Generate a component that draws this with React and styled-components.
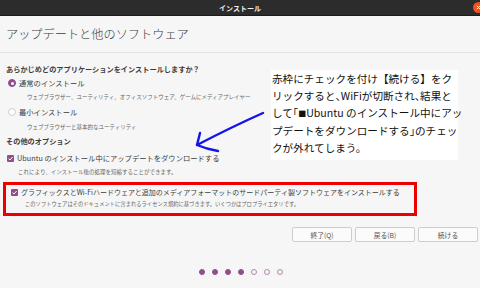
import React from "react";
import styled, { createGlobalStyle } from "styled-components";

const GlobalStyle = createGlobalStyle`
  html, body {
    margin: 0;
    padding: 0;
    background: #f6f6f6;
  }
  body {
    font-family: "Noto Sans CJK JP", "Noto Sans", sans-serif;
  }
`;

const Window = styled.div`
  position: relative;
  width: 480px;
  height: 288px;
  overflow: hidden;
  background: #f6f6f6;
  display: flex;
  flex-direction: column;
`;

const TitleBar = styled.div`
  position: relative;
  height: 15px;
  background: #2c2c2c;
  border-bottom: 1px solid #1a1a1a;
  display: flex;
  align-items: center;
  justify-content: center;
  color: #f2f2f2;
  font-size: 7px;
  font-weight: 700;
`;

const CloseButton = styled.svg`
  position: absolute;
  right: -4px;
  top: 2px;
`;

const Header = styled.div`
  height: 36px;
  display: flex;
  align-items: center;
  padding-left: 6px;
  border-bottom: 1px solid #e3e3e3;
  color: #3c3c3c;
  font-size: 12.2px;
  font-weight: 300;
`;

const Content = styled.div`
  display: flex;
  flex-direction: column;
  padding-top: 9px;
`;

const Row = styled.div`
  height: ${({ h }) => h}px;
  display: flex;
  align-items: center;
  gap: 3px;
  padding-left: ${({ indent }) => indent}px;
  color: ${({ muted }) => (muted ? "#666" : "#3c3c3c")};
  font-size: ${({ size }) => size}px;
  font-weight: ${({ bold }) => (bold ? 700 : 400)};
  white-space: nowrap;
`;

const Radio = styled.span`
  width: 8px;
  height: 8px;
  box-sizing: border-box;
  border-radius: 50%;
  flex: none;
  background: ${({ on }) => (on ? "#924d8b" : "#fff")};
  border: 1px solid ${({ on }) => (on ? "#924d8b" : "#cfcfcf")};
  display: flex;
  align-items: center;
  justify-content: center;
  &::after {
    content: "";
    width: 3px;
    height: 3px;
    border-radius: 50%;
    background: ${({ on }) => (on ? "#fff" : "transparent")};
  }
`;

const RedBox = styled.div`
  margin: 6px 63px 0 3px;
  border: 3px solid #ee0000;
  padding-bottom: 4px;
  display: flex;
  flex-direction: column;
`;

const Buttons = styled.div`
  margin-top: 11px;
  display: flex;
  justify-content: flex-end;
  gap: 3px;
  padding-right: 2px;
`;

const Button = styled.div`
  width: 58px;
  height: 13px;
  border: 1px solid #cdcdcd;
  border-radius: 2px;
  background: #fbfbfb;
  display: flex;
  align-items: center;
  justify-content: center;
  color: #555;
  font-size: 6.8px;
`;

const Dots = styled.div`
  margin-top: 27px;
  display: flex;
  gap: 7px;
  padding-left: 199px;
`;

const Dot = styled.span`
  width: 6px;
  height: 6px;
  box-sizing: border-box;
  border-radius: 50%;
  background: ${({ on }) => (on ? "#924d8b" : "transparent")};
  border: 1px solid ${({ on }) => (on ? "#924d8b" : "#b488b0")};
`;

const Note = styled.div`
  position: absolute;
  left: 271px;
  top: 70px;
  width: 187px;
  height: 90px;
  background: #fff;
  color: #111;
  font-size: 10.6px;
  line-height: 17px;
  white-space: nowrap;
  padding-left: 1px;
  box-sizing: border-box;
`;

const Punct = styled.span`
  font-feature-settings: "halt";
`;

const Square = styled.span`
  font-size: 8px;
`;

const Arrow = styled.svg`
  position: absolute;
  left: 190px;
  top: 105px;
`;

function Check() {
  return (
    <svg width="7" height="7" viewBox="0 0 7 7" style={{ flex: "none" }}>
      <rect width="7" height="7" rx="1" fill="#924d8b" />
      <path d="M1.5 3.6 L3 5 L5.6 2" stroke="#fff" strokeWidth="1" fill="none" />
    </svg>
  );
}

export default function App() {
  return (
    <>
      <GlobalStyle />
      <Window>
        <TitleBar>
          インストール
          <CloseButton width="11" height="11" viewBox="0 0 11 11">
            <circle cx="5.5" cy="5.5" r="5.5" fill="#e95420" />
            <path d="M3.7 3.7 L7.3 7.3 M7.3 3.7 L3.7 7.3" stroke="#fff" strokeWidth="1" />
          </CloseButton>
        </TitleBar>
        <Header>アップデートと他のソフトウェア</Header>
        <Content>
          <Row h={14} indent={6} size={7.2} bold>
            あらかじめどのアプリケーションをインストールしますか？
          </Row>
          <Row h={14} indent={8} size={7.3}>
            <Radio on />
            通常のインストール
          </Row>
          <Row h={14} indent={27} size={5.5} muted>
            ウェブブラウザー、ユーティリティ、オフィスソフトウェア、ゲームにメディアプレイヤー
          </Row>
          <Row h={16} indent={8} size={7.3}>
            <Radio />
            最小インストール
          </Row>
          <Row h={14} indent={27} size={5.5} muted>
            ウェブブラウザーと基本的なユーティリティ
          </Row>
          <Row h={14} indent={6} size={7.2} bold>
            その他のオプション
          </Row>
          <Row h={20} indent={7} size={7.3}>
            <Check />
            Ubuntu のインストール中にアップデートをダウンロードする
          </Row>
          <Row h={8} indent={18} size={5.5} muted>
            これにより、インストール後の処理を短縮することができます。
          </Row>
          <RedBox>
            <Row h={14} indent={5} size={7}>
              <Check />
              グラフィックスとWi-Fiハードウェアと追加のメディアフォーマットのサードパーティ製ソフトウェアをインストールする
            </Row>
            <Row h={10} indent={19} size={5.3} muted>
              このソフトウェアはそのドキュメントに含まれるライセンス規約に基づきます。いくつかはプロプライエタリです。
            </Row>
          </RedBox>
          <Buttons>
            <Button>終了(Q)</Button>
            <Button>戻る(B)</Button>
            <Button>続ける</Button>
          </Buttons>
          <Dots>
            <Dot on />
            <Dot on />
            <Dot on />
            <Dot on />
            <Dot />
            <Dot />
            <Dot />
          </Dots>
        </Content>
        <Note>
          赤枠にチェックを付け【続ける】をク
          <br />
          リックすると<Punct>、</Punct>WiFiが切断され<Punct>、</Punct>結果と
          <br />
          して<Punct>「</Punct><Square>■</Square>Ubuntu のインストール中にアッ
          <br />
          プデートをダウンロードする<Punct>」</Punct>のチェッ
          <br />
          クが外れてしまう。
        </Note>
        <Arrow width="80" height="55" viewBox="0 0 80 55">
          <path
            d="M73 8 C55 16 30 28 7 40"
            stroke="#1414e6"
            strokeWidth="2.4"
            fill="none"
            strokeLinecap="round"
          />
          <path
            d="M10 28 L7 40 C14 43 22 45 28 46"
            stroke="#1414e6"
            strokeWidth="2.4"
            fill="none"
            strokeLinecap="round"
            strokeLinejoin="round"
          />
        </Arrow>
      </Window>
    </>
  );
}
